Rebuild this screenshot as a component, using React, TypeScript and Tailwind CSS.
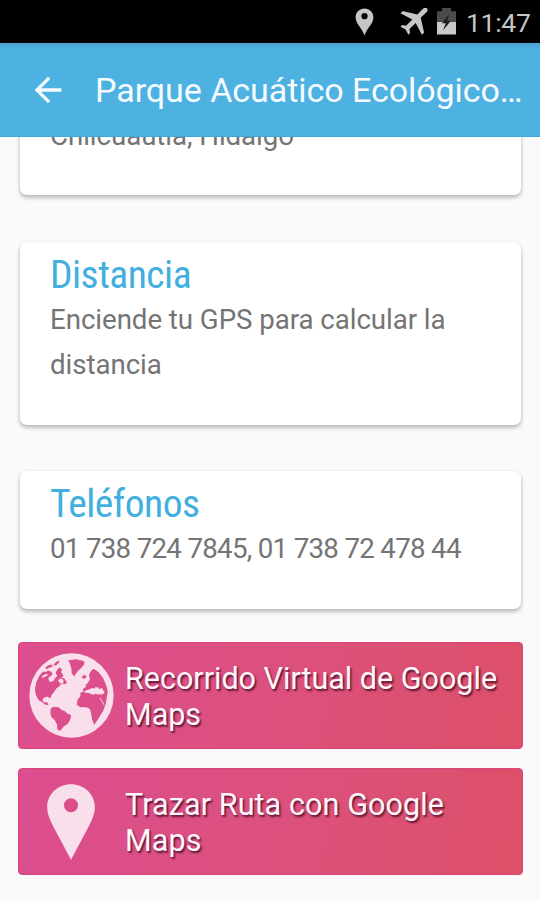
import React from 'react';
import { MdArrowBack } from 'react-icons/md';

function StatusBar() {
  return (
    <div className="flex h-[43px] shrink-0 items-start bg-black pl-[355px] text-[#c6c6c6]">
      <svg className="mt-2 h-[28px] w-[19px] shrink-0" viewBox="0 0 19 28" fill="currentColor">
        <path fillRule="evenodd" d="M9.5.5C4.6.5.6 4.200.6 9.200c0 6.600 5.900 9.800 8.900 18.300 3-8.500 8.900-11.700 8.900-18.300C18.400 4.200 14.400.5 9.500.5Zm0 4.600a3.100 3.100 0 1 1 0 6.200 3.100 3.100 0 0 1 0-6.200Z" />
      </svg>
      <svg className="mt-2 ml-[26px] h-[27px] w-[28px] shrink-0" viewBox="2 4.400 17.200 17" fill="currentColor">
        <path transform="rotate(45 12 12)" d="M21 16v-2l-8-5V3.500c0-.83-.67-1.500-1.500-1.500S10 2.670 10 3.500V9l-8 5v2l8-2.500V19l-2 1.500V22l3.500-1 3.500 1v-1.500L13 19v-5.500l8 2.500z" />
      </svg>
      <svg className="mt-2 ml-[9px] h-[27px] w-[19px] shrink-0" viewBox="0 0 19 27">
        <path d="M5 0h9v3.200h5v10.800H0V3.200h5Z" fill="#4b4b4b" />
        <path d="M0 14h19v12.500H0Z" fill="#c9c9c9" />
        <path d="M12.200 6 5 15.200h3.700l-2.700 7.300L13.700 13h-3.400Z" fill="#202020" />
      </svg>
      <span className="mt-[9px] ml-[10px] text-[26.500px] leading-[28px] whitespace-nowrap tracking-[-0.300px]">11:47</span>
    </div>
  );
}

function Header() {
  return (
    <header className="z-10 flex h-[94px] shrink-0 items-center border-b border-[#45a6dc] bg-linear-to-b from-[#4ba5d3] via-[#4db1e1] via-8% to-[#4db1e1] pl-[28px] text-[#f5fbff]">
      <MdArrowBack size={40} />
      <h1 className="ml-[27px] text-[34px] leading-[46px] whitespace-nowrap tracking-[-0.050px]">Parque Acuático Ecológico…</h1>
    </header>
  );
}

function Card({ title, className, children }: { title?: string; className: string; children: React.ReactNode }) {
  return (
    <section className={`mr-[19px] ml-[20px] shrink-0 rounded-[7px] bg-white px-[30px] shadow-[0_3px_4px_rgba(0,0,0,0.2),0_1px_4px_rgba(0,0,0,0.12)] ${className}`}>
      {title && <h2 className="font-['Roboto_Condensed',Roboto,sans-serif] text-[39.500px] leading-[45px] tracking-[-0.500px] text-[#42afdf]">{title}</h2>}
      <div className="text-[27.700px] leading-[45px] tracking-[-0.060px] text-[#747474]">{children}</div>
    </section>
  );
}

function Globe() {
  return (
    <svg className="h-[85px] w-[85px]" viewBox="6 8 258 258" fill="#f9dfeb">
      <path
        fillRule="evenodd"
        d="M135 9a128 128 0 1 0 0 256 128 128 0 0 0 0-256Z
        M28 96 38 76 48 65 58 65 65 61 75 66 77 75 69 79 67 90 72 96 81 92 85 84 92 78 87 69 92 58 99 52 106 57 104 67 111 76 105 82 113 85 122 99 113 103 107 100 99 108 89 116 82 126 74 136 71 146 63 141 52 143 47 151 49 157 62 158 65 166 56 165 45 157 35 151 27 136 24 119Z
        M55 53 64 45 73 43 79 46 74 51 66 53 60 57Z
        M80 43 90 34 99 31 95 40 87 47Z
        M125 30 150 27 174 33 173 44 165 53 153 64 143 79 136 70 134 53 130 39Z
        M169 77 177 75 181 81 174 86 166 84Z
        M188 74 193 64 202 56 216 65 231 84 241 108 245 125 243 137 239 163 231 184 218 205 204 226 198 211 194 190 191 178 180 173 162 173 151 165 153 150 162 139 162 129 172 125 169 117 178 112 178 104 185 99 191 87Z
        M72 177 79 171 96 173 104 180 114 184 123 192 134 197 131 211 122 224 111 231 101 244 92 240 91 225 84 212 74 202 71 190Z"
      />
      <path d="m172 127 9-7 9-2 7-4 11 2-2-5 10 2 3 5 8-4 4 7 5 6-6 6-14 1-8-2-7 3-12-5-10-1Z" />
      <path d="m222 143 13 22-1 3-14-24Z" />
      <path d="m46 78 10-6 9 2-8 5-12 5ZM64 83l8-2 4 9-8 5ZM94 91l9-6 7 4 1 9-10 3Z" />
    </svg>
  );
}

function Pin() {
  return (
    <svg className="h-[76px] w-[48px]" viewBox="0 0 48 76" fill="#f9dfeb">
      <path fillRule="evenodd" d="M24 .3C10.800.3.200 10.300.200 23.200c0 6.300 2.600 12.300 6.200 19.500L24 75.700l17.600-33c3.600-7.200 6.200-13.200 6.200-19.500C47.800 10.300 37.200.3 24 .3Zm0 14a7 7 0 1 1 0 14 7 7 0 0 1 0-14Z" />
    </svg>
  );
}

function ActionButton({ icon, children, className = '' }: { icon: React.ReactNode; children: React.ReactNode; className?: string }) {
  return (
    <button className={`mr-[17px] ml-[18px] flex h-[107px] shrink-0 items-center rounded-[4px] border border-[#db4478] bg-linear-[105deg] from-[#dc4e90] via-[#dc507e] to-[#dc5068] text-left text-[30.500px] leading-[36px] text-[#fff6fa] [text-shadow:1.500px_2px_2px_rgba(50,0,25,0.75)] ${className}`}>
      <span className="flex w-[104px] shrink-0 justify-center">{icon}</span>
      <span className="w-[390px] pt-[2px] pl-[2px]">{children}</span>
    </button>
  );
}

export default function App() {
  return (
    <div className="flex h-[900px] w-[540px] flex-col overflow-hidden bg-[#fafafa] font-[Roboto,sans-serif]">
      <StatusBar />
      <Header />
      <main className="flex min-h-0 flex-1 flex-col">
        <Card className="-mt-[24px] h-[82px]">Chilcuautla, Hidalgo</Card>
        <Card title="Distancia" className="mt-[47px] h-[183px] pt-[10px]">Enciende tu GPS para calcular la distancia</Card>
        <Card title="Teléfonos" className="mt-[46px] h-[138px] pt-[10px]">
          <span className="tracking-[-0.700px] whitespace-nowrap">01 738 724 7845, 01 738 72 478 44</span>
        </Card>
        <ActionButton className="mt-[33px]" icon={<Globe />}>Recorrido Virtual de Google Maps</ActionButton>
        <ActionButton className="mt-[19px] tracking-[0.100px]" icon={<Pin />}>Trazar Ruta con Google Maps</ActionButton>
      </main>
    </div>
  );
}
